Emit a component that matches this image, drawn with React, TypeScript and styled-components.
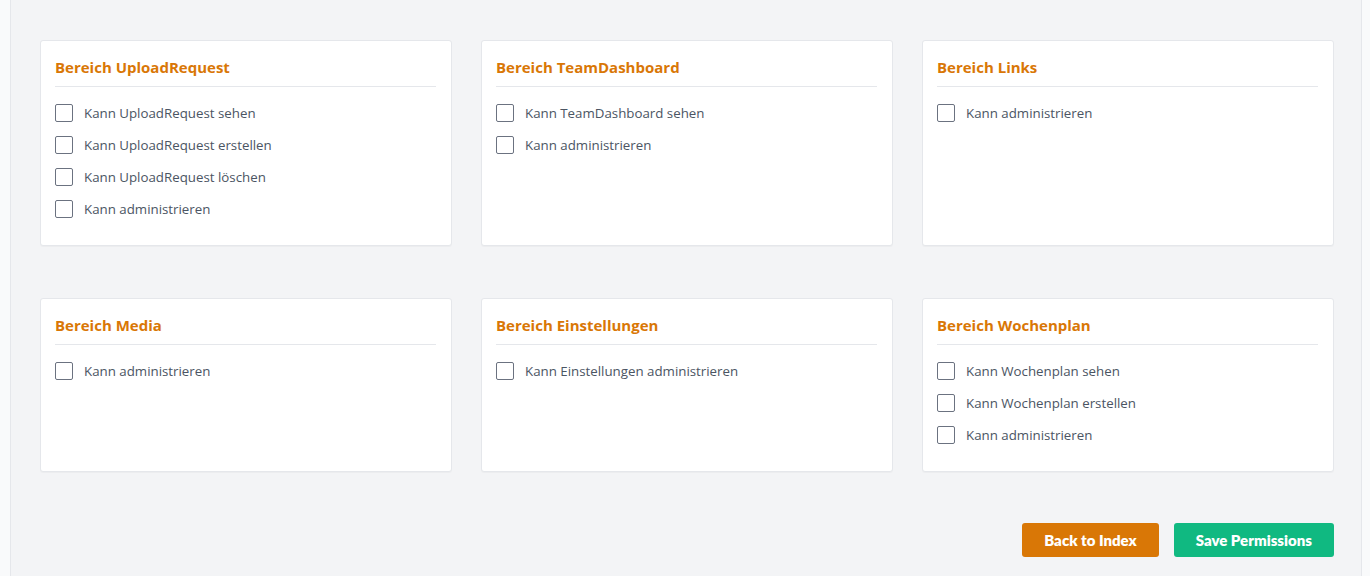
import React from 'react';
import styled, { createGlobalStyle } from 'styled-components';

interface Section {
    title: string;
    permissions: string[];
}

const SECTIONS: Section[] = [
    {
        title: 'Bereich UploadRequest',
        permissions: [
            'Kann UploadRequest sehen',
            'Kann UploadRequest erstellen',
            'Kann UploadRequest löschen',
            'Kann administrieren',
        ],
    },
    {
        title: 'Bereich TeamDashboard',
        permissions: ['Kann TeamDashboard sehen', 'Kann administrieren'],
    },
    {
        title: 'Bereich Links',
        permissions: ['Kann administrieren'],
    },
    {
        title: 'Bereich Media',
        permissions: ['Kann administrieren'],
    },
    {
        title: 'Bereich Einstellungen',
        permissions: ['Kann Einstellungen administrieren'],
    },
    {
        title: 'Bereich Wochenplan',
        permissions: ['Kann Wochenplan sehen', 'Kann Wochenplan erstellen', 'Kann administrieren'],
    },
];

const PermissionCard = ({ title, permissions }: Section) => {
    return (
        <Card>
            <CardTitle>{title}</CardTitle>
            <PermissionList>
                {permissions.map((p) => (
                    <PermissionRow key={p}>
                        <Checkbox type="checkbox" />
                        <PermissionLabel>{p}</PermissionLabel>
                    </PermissionRow>
                ))}
            </PermissionList>
        </Card>
    );
};

export default function App() {
    return (
        <>
            <GlobalStyle />
            <Page>
                <Main>
                    <CardGrid>
                        {SECTIONS.map((s) => (
                            <PermissionCard key={s.title} {...s} />
                        ))}
                    </CardGrid>
                    <Actions>
                        <ActionButton $color="#d97706">Back to Index</ActionButton>
                        <ActionButton $color="#10b981">Save Permissions</ActionButton>
                    </Actions>
                </Main>
            </Page>
        </>
    );
}

const GlobalStyle = createGlobalStyle`
    html, body {
        margin: 0;
        padding: 0;
        background: #f9fafb;
    }
    * {
        box-sizing: border-box;
    }
`;

const Page = styled.div`
    padding: 0 8px 0 10px;
    min-height: 576px;
`;

const Main = styled.main`
    background: #f3f4f6;
    border-left: 1px solid #e5e7eb;
    border-right: 1px solid #e5e7eb;
    padding: 40px 27px 20px 29px;
    min-height: 576px;
`;

const CardGrid = styled.div`
    display: grid;
    grid-template-columns: repeat(3, 412px);
    column-gap: 29px;
    row-gap: 52px;
    justify-content: start;
`;

const Card = styled.section`
    background: #ffffff;
    border: 1px solid #e5e7eb;
    border-radius: 3px;
    box-shadow: 0 1px 1px rgba(0, 0, 0, 0.03);
    padding: 14px 15px 20px 14px;
`;

const CardTitle = styled.h3`
    margin: 0;
    padding-bottom: 7px;
    border-bottom: 1px solid #e5e7eb;
    color: #d97706;
    font-family: 'Open Sans', sans-serif;
    font-weight: 700;
    font-size: 15px;
    line-height: 24px;
`;

const PermissionList = styled.div`
    display: flex;
    flex-direction: column;
    padding-top: 10px;
`;

const PermissionRow = styled.label`
    display: flex;
    align-items: center;
    height: 32px;
    gap: 11px;
`;

const Checkbox = styled.input`
    appearance: none;
    margin: 0;
    width: 18px;
    height: 18px;
    border: 1px solid #6b7280;
    border-radius: 2px;
    background: #ffffff;
`;

const PermissionLabel = styled.span`
    color: #4b5563;
    font-family: 'Open Sans', sans-serif;
    font-size: 13.3px;
`;

const Actions = styled.div`
    display: flex;
    justify-content: flex-end;
    gap: 15px;
    margin-top: 51px;
`;

const ActionButton = styled.button<{ $color: string }>`
    height: 34px;
    padding: 0 22px;
    border: none;
    border-radius: 3px;
    background: ${({ $color }) => $color};
    color: #ffffff;
    font-family: Lato, sans-serif;
    font-weight: 800;
    font-size: 15px;
`;
